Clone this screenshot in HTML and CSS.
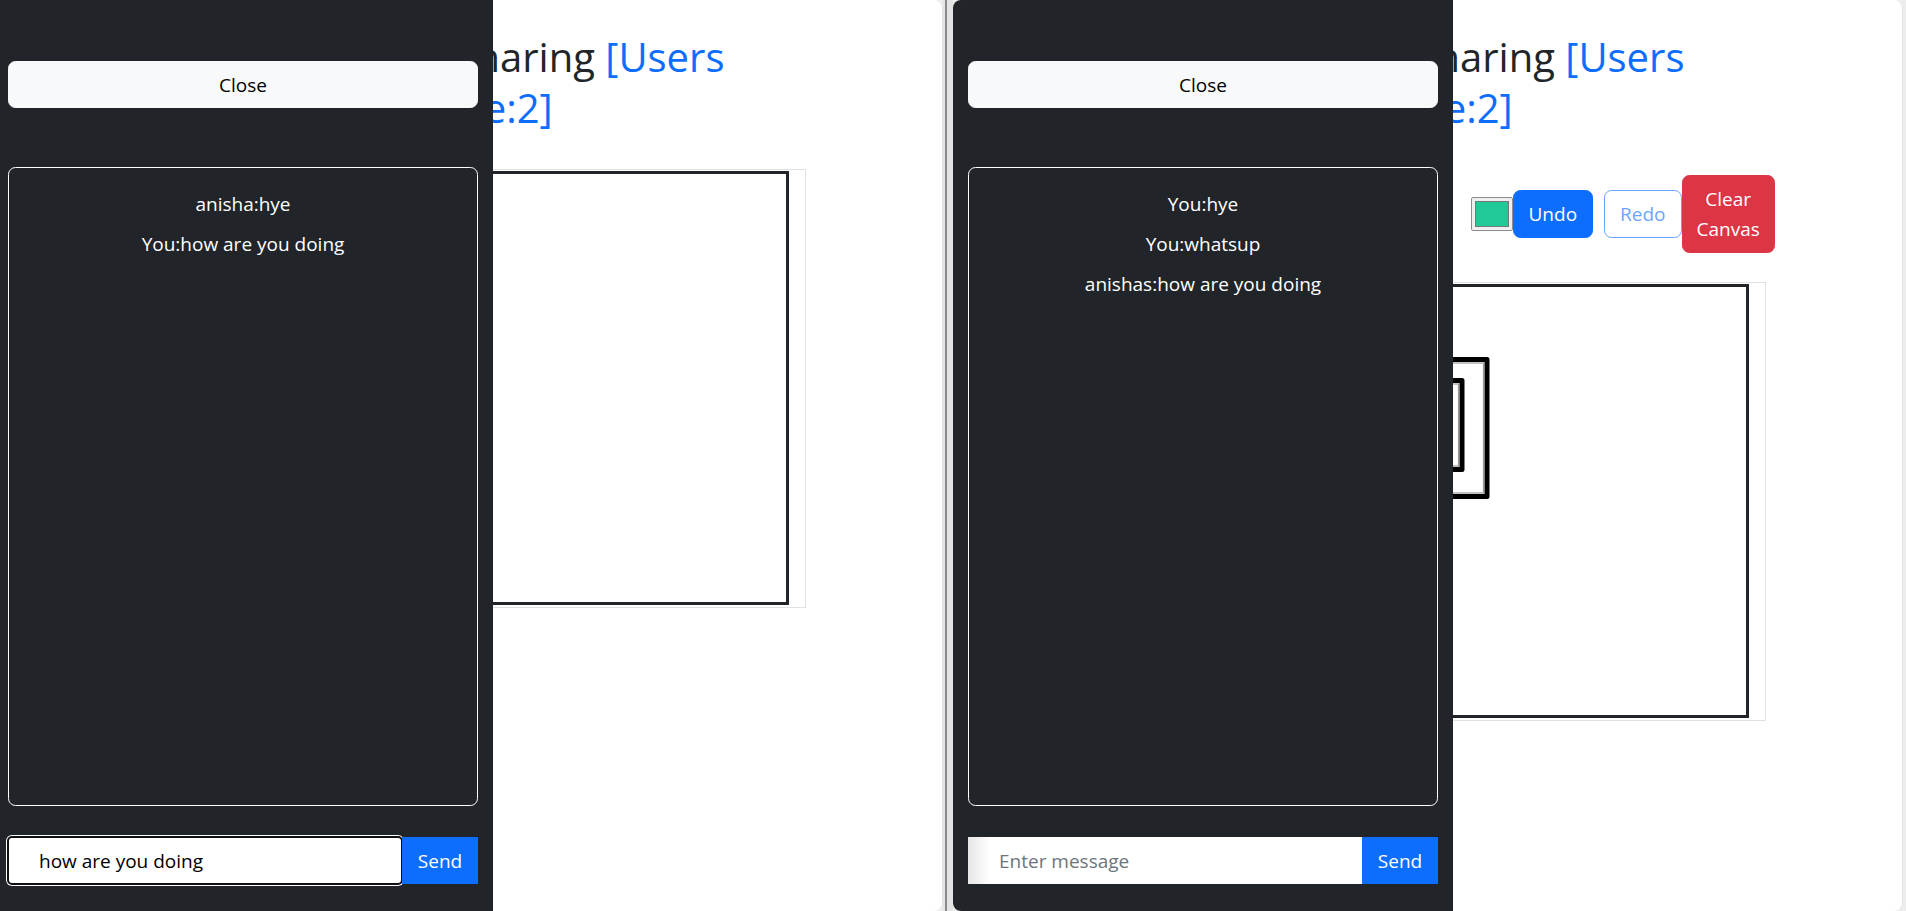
FILE: index.html
```html
<!DOCTYPE html>
<html lang="en">
<head>
<meta charset="utf-8">
<title>White Board Sharing</title>
<link rel="stylesheet" href="styles.css">
</head>
<body>
<div class="desktop">
  <div class="win win-left">
    <main class="container">
      <h1 class="title">White Board Sharing <span class="users">[Users Online:2]</span></h1>
      <div class="board board-viewer">
        <div class="canvas"></div>
      </div>
    </main>
    <aside class="chat">
      <button class="btn-close" type="button">Close</button>
      <div class="messages">
        <p class="msg">anisha:hye</p>
        <p class="msg">You:how are you doing</p>
      </div>
      <form class="send-row">
        <input class="msg-input is-focused" type="text" value="how are you doing" placeholder="Enter message">
        <button class="btn-send" type="button">Send</button>
      </form>
    </aside>
  </div>

  <div class="divider"><span class="divider-line"></span></div>

  <div class="win win-right">
    <main class="container">
      <h1 class="title">White Board Sharing <span class="users">[Users Online:2]</span></h1>
      <div class="toolbar">
        <span class="color-input"><span class="swatch"></span></span>
        <button class="btn btn-primary" type="button">Undo</button>
        <button class="btn btn-outline" type="button" disabled>Redo</button>
        <button class="btn btn-danger btn-clear" type="button">Clear Canvas</button>
      </div>
      <div class="board board-presenter">
        <div class="canvas">
          <svg class="drawing" width="640" height="428" viewBox="0 0 640 428">
            <rect x="200" y="72.5" width="177" height="137" fill="none" stroke="#000" stroke-width="5" stroke-linejoin="round"/>
            <rect x="203.5" y="76" width="170" height="130" fill="none" stroke="#9a9a9a" stroke-width="1.2"/>
            <rect x="230" y="93.5" width="122" height="89" fill="none" stroke="#000" stroke-width="5" stroke-linejoin="round"/>
            <rect x="233.5" y="97" width="115" height="82" fill="none" stroke="#9a9a9a" stroke-width="1.2"/>
          </svg>
        </div>
      </div>
    </main>
    <aside class="chat">
      <button class="btn-close" type="button">Close</button>
      <div class="messages">
        <p class="msg">You:hye</p>
        <p class="msg">You:whatsup</p>
        <p class="msg">anishas:how are you doing</p>
      </div>
      <form class="send-row">
        <input class="msg-input is-idle" type="text" placeholder="Enter message">
        <button class="btn-send" type="button">Send</button>
      </form>
    </aside>
  </div>
</div>
</body>
</html>
```

FILE: styles.css
```css
* {
  box-sizing: border-box;
}

html,
body {
  margin: 0;
  padding: 0;
}

body {
  width: 1906px;
  height: 911px;
  overflow: hidden;
  background: #ededed;
  font-family: "Open Sans", "Noto Sans", "DejaVu Sans", sans-serif;
  color: #212529;
}

.desktop {
  display: flex;
  height: 911px;
}

.win {
  position: relative;
  flex: none;
  width: 950px;
  height: 911px;
  background: #fff;
  border-radius: 8px;
  overflow: hidden;
}

.win-left {
  margin-left: -7px;
  box-shadow: inset -1px 0 0 #e2e2e2;
}

.win-right {
  box-shadow: inset -1px 0 0 #e2e2e2;
}

.divider {
  flex: none;
  width: 10px;
  height: 911px;
  background: #e4e4e4;
  display: flex;
}

.divider-line {
  margin-left: 2px;
  width: 2px;
  background: #8a8a8a;
}

/* ---------- main content ---------- */
.container {
  width: 675px;
  margin: 0 auto;
  padding: 31px 15px 0;
}

.title {
  margin: 0;
  font-size: 40px;
  line-height: 51px;
  font-weight: 500;
  text-align: center;
  color: #212529;
}

.users {
  color: #0d6efd;
}

.toolbar {
  display: flex;
  align-items: center;
  height: 77px;
  margin-top: 42px;
  padding-left: 365px;
}

.color-input {
  flex: none;
  width: 42px;
  height: 34px;
  padding: 3px;
  background: #efefef;
  border: 1px solid #8d8d8d;
  border-radius: 2px;
  display: flex;
}

.swatch {
  flex: 1;
  background: #20c997;
  border: 1px solid #777;
}

.btn {
  flex: none;
  font-family: inherit;
  font-size: 19px;
  line-height: 30px;
  padding: 8px 15px;
  border: 1px solid transparent;
  border-radius: 7.5px;
  background: transparent;
  cursor: pointer;
}

.btn-primary {
  background: #0d6efd;
  border-color: #0d6efd;
  color: #fff;
}

.btn-outline {
  margin-left: 11px;
  border-color: #0d6efd;
  color: #0d6efd;
  opacity: 0.62;
}

.btn-danger {
  background: #dc3545;
  border-color: #dc3545;
  color: #fff;
}

.btn-clear {
  width: min-content;
  padding-left: 14px;
  padding-right: 14px;
}

.board {
  margin: 0 -15px;
  padding: 1px 16px 2px 15px;
  border: 1px solid #dee2e6;
}

.board-viewer {
  margin-top: 36px;
}

.board-presenter {
  margin-top: 30px;
}

.canvas {
  height: 434px;
  border: 3px solid #212529;
  background: #fff;
  overflow: hidden;
}

.drawing {
  display: block;
}

/* ---------- chat offcanvas ---------- */
.chat {
  position: absolute;
  left: 0;
  top: 0;
  bottom: 0;
  width: 500px;
  background: #212529;
  padding: 61px 15px 0 15px;
  display: flex;
  flex-direction: column;
}

.btn-close {
  height: 47px;
  width: 100%;
  font-family: inherit;
  font-size: 19px;
  color: #000;
  background: #f8f9fa;
  border: 1px solid #f8f9fa;
  border-radius: 7.5px;
}

.messages {
  margin-top: 59px;
  height: 639px;
  border: 1px solid #fff;
  border-radius: 7.5px;
  padding-top: 16px;
  text-align: center;
  color: #fff;
}

.msg {
  margin: 0;
  font-size: 19px;
  line-height: 40px;
}

.send-row {
  margin: 31px 0 0;
  display: flex;
  height: 47px;
}

.msg-input {
  flex: 1;
  min-width: 0;
  height: 47px;
  border: 0;
  padding: 0 0 0 31px;
  font-family: inherit;
  font-size: 19px;
  color: #000;
  background: #fff;
}

.msg-input::placeholder {
  color: #6c757d;
}

.is-focused {
  border-radius: 4px;
  outline: 2px solid #101010;
  outline-offset: -1px;
  box-shadow: 0 0 0 2px #fff;
}

.is-idle {
  outline: none;
  background: linear-gradient(90deg, #e6e6e6 0, #fff 22px);
}

.btn-send {
  flex: none;
  width: 76px;
  height: 47px;
  border: 0;
  border-radius: 0;
  background: #0d6efd;
  color: #fff;
  font-family: inherit;
  font-size: 19px;
}
```
